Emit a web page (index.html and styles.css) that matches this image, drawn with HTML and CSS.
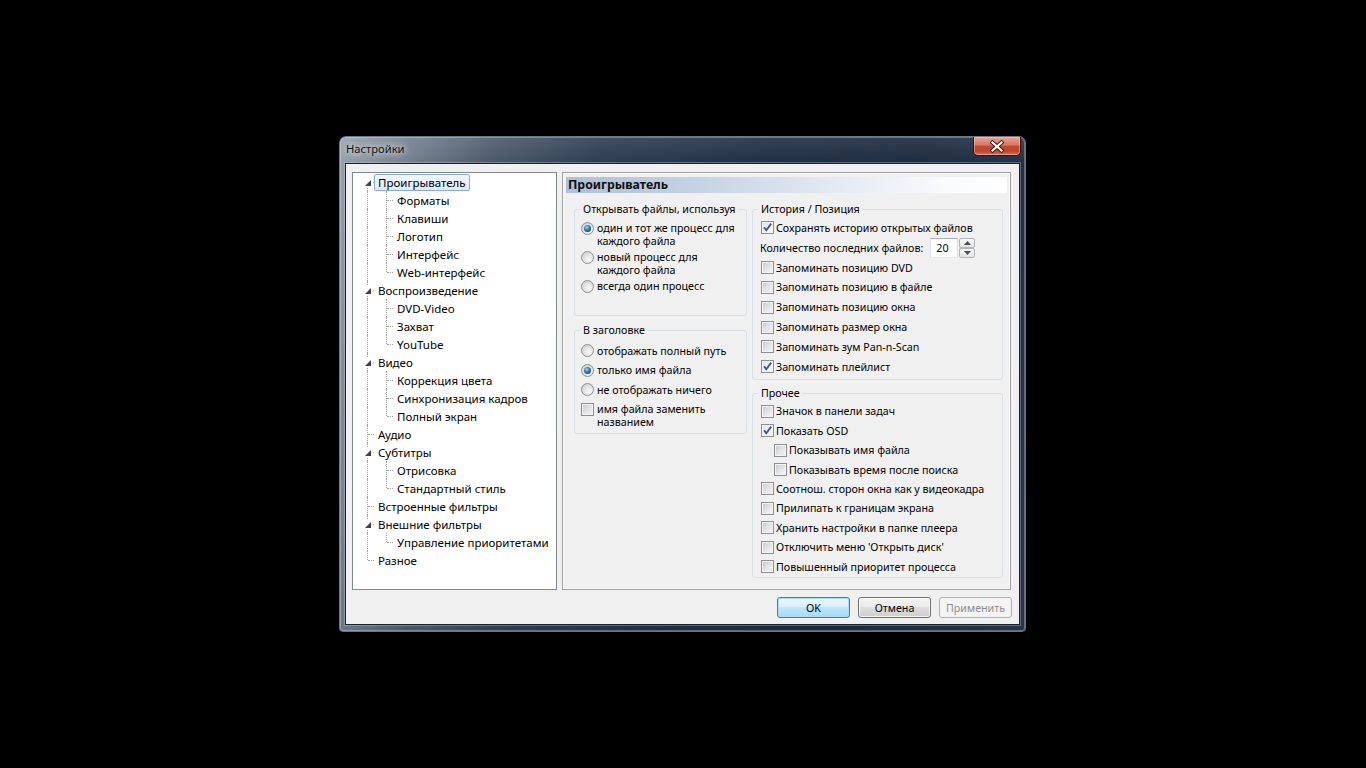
FILE: index.html
```html
<!DOCTYPE html>
<html lang="ru">
<head>
<meta charset="utf-8">
<title>Настройки</title>
<link rel="stylesheet" href="styles.css">
</head>
<body>
<div class="window">
  <div class="titlebar">
    <span class="title">Настройки</span>
    <div class="close">
      <svg width="16" height="13" viewBox="0 0 16 13"><path d="M3.5 2.5 L12.5 10.5 M12.5 2.5 L3.5 10.5" stroke="#3a1410" stroke-width="4" stroke-linecap="square"/><path d="M3.5 2.5 L12.5 10.5 M12.5 2.5 L3.5 10.5" stroke="#ffffff" stroke-width="2.2" stroke-linecap="square"/></svg>
    </div>
  </div>
  <div class="client">
    <div class="main">
      <div class="tree">
        <div class="row r first"><i class="vl bh"></i><i class="hl"></i><i class="tri"><svg width="6" height="6" viewBox="0 0 6 6"><path d="M6 0V6H0Z" fill="#404040"/></svg></i><span class="label sel">Проигрыватель</span></div>
        <div class="row c"><i class="vl"></i><i class="cvl"></i><i class="chl"></i><span class="label">Форматы</span></div>
        <div class="row c"><i class="vl"></i><i class="cvl"></i><i class="chl"></i><span class="label">Клавиши</span></div>
        <div class="row c"><i class="vl"></i><i class="cvl"></i><i class="chl"></i><span class="label">Логотип</span></div>
        <div class="row c"><i class="vl"></i><i class="cvl"></i><i class="chl"></i><span class="label">Интерфейс</span></div>
        <div class="row c"><i class="vl"></i><i class="cvl th"></i><i class="chl"></i><span class="label">Web-интерфейс</span></div>
        <div class="row r"><i class="vl"></i><i class="hl"></i><i class="tri"><svg width="6" height="6" viewBox="0 0 6 6"><path d="M6 0V6H0Z" fill="#404040"/></svg></i><span class="label">Воспроизведение</span></div>
        <div class="row c"><i class="vl"></i><i class="cvl"></i><i class="chl"></i><span class="label">DVD-Video</span></div>
        <div class="row c"><i class="vl"></i><i class="cvl"></i><i class="chl"></i><span class="label">Захват</span></div>
        <div class="row c"><i class="vl"></i><i class="cvl th"></i><i class="chl"></i><span class="label">YouTube</span></div>
        <div class="row r"><i class="vl"></i><i class="hl"></i><i class="tri"><svg width="6" height="6" viewBox="0 0 6 6"><path d="M6 0V6H0Z" fill="#404040"/></svg></i><span class="label">Видео</span></div>
        <div class="row c"><i class="vl"></i><i class="cvl"></i><i class="chl"></i><span class="label">Коррекция цвета</span></div>
        <div class="row c"><i class="vl"></i><i class="cvl"></i><i class="chl"></i><span class="label">Синхронизация кадров</span></div>
        <div class="row c"><i class="vl"></i><i class="cvl th"></i><i class="chl"></i><span class="label">Полный экран</span></div>
        <div class="row r"><i class="vl"></i><i class="hl"></i><span class="label">Аудио</span></div>
        <div class="row r"><i class="vl"></i><i class="hl"></i><i class="tri"><svg width="6" height="6" viewBox="0 0 6 6"><path d="M6 0V6H0Z" fill="#404040"/></svg></i><span class="label">Субтитры</span></div>
        <div class="row c"><i class="vl"></i><i class="cvl"></i><i class="chl"></i><span class="label">Отрисовка</span></div>
        <div class="row c"><i class="vl"></i><i class="cvl th"></i><i class="chl"></i><span class="label">Стандартный стиль</span></div>
        <div class="row r"><i class="vl"></i><i class="hl"></i><span class="label">Встроенные фильтры</span></div>
        <div class="row r"><i class="vl"></i><i class="hl"></i><i class="tri"><svg width="6" height="6" viewBox="0 0 6 6"><path d="M6 0V6H0Z" fill="#404040"/></svg></i><span class="label">Внешние фильтры</span></div>
        <div class="row c"><i class="vl"></i><i class="cvl th"></i><i class="chl"></i><span class="label">Управление приоритетами</span></div>
        <div class="row r"><i class="vl th"></i><i class="hl"></i><span class="label">Разное</span></div>
      </div>

      <div class="panel">
        <div class="panel-head">Проигрыватель</div>
        <div class="cols">
          <div class="col col-left">
            <div class="group g-open">
              <span class="gtitle">Открывать файлы, используя</span>
              <div class="opts">
                <div class="opt"><span class="radio on"></span><span class="txt">один и тот же процесс для<br>каждого файла</span></div>
                <div class="opt"><span class="radio"></span><span class="txt">новый процесс для<br>каждого файла</span></div>
                <div class="opt"><span class="radio"></span><span class="txt">всегда один процесс</span></div>
              </div>
            </div>
            <div class="group g-title">
              <span class="gtitle">В заголовке</span>
              <div class="rows rows-title">
                <div class="line lt"><span class="radio"></span><span class="txt">отображать полный путь</span></div>
                <div class="line lt"><span class="radio on"></span><span class="txt">только имя файла</span></div>
                <div class="line lt"><span class="radio"></span><span class="txt">не отображать ничего</span></div>
                <div class="opt opt-cb"><span class="cb"></span><span class="txt">имя файла заменить<br>названием</span></div>
              </div>
            </div>
          </div>
          <div class="col col-right">
            <div class="group g-hist">
              <span class="gtitle">История / Позиция</span>
              <div class="rows rows-hist">
                <div class="line lh"><span class="cb on"><svg width="11" height="11" viewBox="0 0 11 11"><path d="M2 5.2 L4.3 8.3 L9.2 1.6" fill="none" stroke="#3f5686" stroke-width="1.8"/></svg></span><span class="txt">Сохранять историю открытых файлов</span></div>
                <div class="line lh spinrow"><span class="txt">Количество последних файлов:</span>
                  <span class="spin"><span class="spin-edit">20</span><span class="spin-btns"><span class="sb"><svg width="7" height="4" viewBox="0 0 7 4"><path d="M0 4H7L3.5 0Z" fill="#4d4d4d"/></svg></span><span class="sb"><svg width="7" height="4" viewBox="0 0 7 4"><path d="M0 0H7L3.5 4Z" fill="#4d4d4d"/></svg></span></span></span>
                </div>
                <div class="line lh"><span class="cb"></span><span class="txt">Запоминать позицию DVD</span></div>
                <div class="line lh"><span class="cb"></span><span class="txt">Запоминать позицию в файле</span></div>
                <div class="line lh"><span class="cb"></span><span class="txt">Запоминать позицию окна</span></div>
                <div class="line lh"><span class="cb"></span><span class="txt">Запоминать размер окна</span></div>
                <div class="line lh"><span class="cb"></span><span class="txt">Запоминать зум Pan-n-Scan</span></div>
                <div class="line lh"><span class="cb on"><svg width="11" height="11" viewBox="0 0 11 11"><path d="M2 5.2 L4.3 8.3 L9.2 1.6" fill="none" stroke="#3f5686" stroke-width="1.8"/></svg></span><span class="txt">Запоминать плейлист</span></div>
              </div>
            </div>
            <div class="group g-misc">
              <span class="gtitle">Прочее</span>
              <div class="rows rows-misc">
                <div class="line lm"><span class="cb"></span><span class="txt">Значок в панели задач</span></div>
                <div class="line lm"><span class="cb on"><svg width="11" height="11" viewBox="0 0 11 11"><path d="M2 5.2 L4.3 8.3 L9.2 1.6" fill="none" stroke="#3f5686" stroke-width="1.8"/></svg></span><span class="txt">Показать OSD</span></div>
                <div class="line lm ind"><span class="cb"></span><span class="txt">Показывать имя файла</span></div>
                <div class="line lm ind"><span class="cb"></span><span class="txt">Показывать время после поиска</span></div>
                <div class="line lm"><span class="cb"></span><span class="txt">Соотнош. сторон окна как у видеокадра</span></div>
                <div class="line lm"><span class="cb"></span><span class="txt">Прилипать к границам экрана</span></div>
                <div class="line lm"><span class="cb"></span><span class="txt">Хранить настройки в папке плеера</span></div>
                <div class="line lm"><span class="cb"></span><span class="txt">Отключить меню 'Открыть диск'</span></div>
                <div class="line lm"><span class="cb"></span><span class="txt">Повышенный приоритет процесса</span></div>
              </div>
            </div>
          </div>
        </div>
      </div>
    </div>
    <div class="buttons">
      <button class="btn default">OK</button>
      <button class="btn">Отмена</button>
      <button class="btn disabled">Применить</button>
    </div>
  </div>
</div>
</body>
</html>
```

FILE: styles.css
```css
html, body {
  margin: 0;
  padding: 0;
  background: #000;
}
body {
  width: 1366px;
  height: 768px;
  overflow: hidden;
  font-family: "Noto Sans", "Open Sans", sans-serif;
  font-size: 11.5px;
  color: #000;
}

/* ---------- window frame ---------- */
.window {
  margin: 136px 0 0 339px;
  width: 687px;
  height: 496px;
  box-sizing: border-box;
  border: 1px solid #6b7784;
  border-radius: 7px 7px 4px 4px;
  padding: 0 6px 7px;
  display: flex;
  flex-direction: column;
  background:
    linear-gradient(180deg, rgba(255,255,255,0.10) 0px, rgba(255,255,255,0) 28px),
    linear-gradient(100deg, #97a2ad 0%, #74818f 9%, #4a596a 20%, #2c3c50 34%, #1f2e42 55%, #1b2a3d 75%, #26364a 100%);
  box-shadow: inset 0 0 0 1px rgba(255,255,255,0.28);
}
.titlebar {
  height: 27px;
  flex: none;
  display: flex;
  justify-content: space-between;
  align-items: flex-start;
}
.title {
  padding-top: 4px;
  line-height: 16px;
  font-size: 11.2px;
  color: #111;
  text-shadow: 0 0 6px rgba(255,255,255,0.9), 0 0 10px rgba(255,255,255,0.6);
}
.close {
  width: 48px;
  height: 19px;
  margin-right: -2px;
  box-sizing: border-box;
  border: 1px solid #3d120c;
  border-top: none;
  border-radius: 0 0 5px 5px;
  background: linear-gradient(180deg, #e8a594 0%, #d37864 45%, #c34a33 50%, #c4432b 80%, #d9745a 100%);
  box-shadow: inset 0 0 0 1px rgba(255,210,200,0.45);
  display: flex;
  align-items: center;
  justify-content: center;
}

/* ---------- client ---------- */
.client {
  height: 460px;
  flex: none;
  background: #f0f0f0;
  display: flex;
  flex-direction: column;
  box-shadow: 0 0 0 1px #17222f, 0 0 0 2px rgba(200,210,222,0.35);
}
.main {
  display: flex;
  gap: 5px;
  padding: 8px 8px 0 6px;
  height: 418px;
}

/* ---------- tree ---------- */
.tree {
  width: 205px;
  height: 418px;
  box-sizing: border-box;
  border: 1px solid #828790;
  background: #fff;
}
.row {
  position: relative;
  height: 18px;
  display: flex;
  align-items: center;
}
.row.r { padding-left: 21px; }
.row.c { padding-left: 40px; }
.label {
  border: 1px solid transparent;
  border-radius: 2px;
  padding: 0 3px;
  line-height: 15px;
  white-space: nowrap;
}
.label.sel {
  border-color: #84acdd;
  background: linear-gradient(180deg, #f2f7fe 0%, #dde9f8 100%);
}
.vl, .cvl, .hl, .chl {
  position: absolute;
  display: block;
}
.vl {
  left: 14px;
  top: 0;
  height: 18px;
  border-left: 1px dotted #a0a0a0;
}
.vl.bh { top: 9px; height: 9px; }
.vl.th { height: 9px; }
.cvl {
  left: 33px;
  top: 0;
  height: 18px;
  border-left: 1px dotted #a0a0a0;
}
.cvl.th { height: 9px; }
.hl {
  left: 15px;
  top: 9px;
  width: 6px;
  border-top: 1px dotted #a0a0a0;
}
.chl {
  left: 34px;
  top: 9px;
  width: 6px;
  border-top: 1px dotted #a0a0a0;
}
.tri {
  position: absolute;
  left: 10px;
  top: 5px;
  width: 9px;
  height: 9px;
  background: #fff;
  display: flex;
  align-items: center;
  justify-content: center;
}

/* ---------- panel ---------- */
.panel {
  width: 449px;
  height: 418px;
  box-sizing: border-box;
  border: 1px solid #a0a0a0;
  box-shadow: inset 0 0 0 1px #fbfbfb;
  padding: 4px 3px 0;
  font-size: 10.7px;
}
.panel-head {
  height: 16px;
  line-height: 16px;
  padding-left: 2px;
  font-weight: bold;
  font-size: 12.3px;
  color: #111;
  background: linear-gradient(90deg, #aebfd7 0%, #c6d3e4 30%, #e2e9f2 60%, #f8fafc 85%, #ffffff 100%);
}
.cols {
  display: flex;
  gap: 5px;
  margin: 16px 0 0 8px;
}
.col-left { width: 173px; }
.col-right { width: 251px; }

.group {
  box-sizing: border-box;
  border: 1px solid #d5dfe5;
  border-radius: 3px;
}
.gtitle {
  display: block;
  width: max-content;
  margin: -8px 0 0 5px;
  padding: 0 3px;
  line-height: 14px;
  background: #f0f0f0;
}
.g-open { height: 107px; }
.g-title { height: 104px; margin-top: 14px; }
.g-hist { height: 171px; }
.g-misc { height: 185px; margin-top: 13px; }

.opts { padding-top: 6px; }
.opt {
  display: flex;
  align-items: flex-start;
  gap: 3px;
  padding-left: 6px;
  line-height: 13px;
  margin-bottom: 3px;
}
.opt-cb { padding-top: 3px; }

.rows-title { padding-top: 4px; }
.rows-hist { padding-top: 2px; }
.rows-misc { padding-top: 1.5px; }

.line {
  display: flex;
  align-items: center;
  white-space: nowrap;
}
.lt { height: 19.5px; padding-left: 6px; gap: 3px; }
.lh { height: 19.85px; padding-left: 8px; gap: 2px; }
.lm { height: 19.45px; padding-left: 8px; gap: 2px; }
.lm.ind { padding-left: 21px; }
.spinrow { padding-left: 7px; }

/* ---------- controls ---------- */
.radio {
  flex: none;
  width: 13px;
  height: 13px;
  box-sizing: border-box;
  border: 1px solid #8e8f8f;
  border-radius: 50%;
  background: radial-gradient(circle at 65% 70%, #f8f8f8 0%, #e6e7e9 40%, #c3c7cc 100%);
  display: flex;
  align-items: center;
  justify-content: center;
}
.radio.on::after {
  content: "";
  width: 7px;
  height: 7px;
  border-radius: 50%;
  background: radial-gradient(circle at 40% 35%, #a6ddf6 0%, #3d8cc0 35%, #1a4f7d 70%, #123a5f 100%);
}
.cb {
  flex: none;
  width: 13px;
  height: 13px;
  box-sizing: border-box;
  border: 1px solid #8e8f8f;
  background: linear-gradient(135deg, #c2c6cc 0%, #dfe1e4 45%, #f6f6f6 100%);
  box-shadow: inset 0 0 0 1px #f4f4f4;
  display: flex;
  align-items: center;
  justify-content: center;
}
.cb.on {
  background: linear-gradient(135deg, #dfe3e8 0%, #f2f3f5 60%, #fbfbfb 100%);
}

.spin {
  display: flex;
  height: 20px;
  margin-left: 5px;
}
.spin-edit {
  width: 28px;
  box-sizing: border-box;
  border: 1px solid;
  border-color: #abadb3 #dbdfe6 #e3e9ef #e2e3ea;
  background: #fff;
  padding-left: 5px;
  line-height: 18px;
}
.spin-btns {
  display: flex;
  flex-direction: column;
  width: 16px;
  margin-left: 1px;
}
.sb {
  flex: 1;
  box-sizing: border-box;
  border: 1px solid #b1b6bc;
  border-radius: 2px;
  background: linear-gradient(180deg, #f7f7f7 0%, #e4e4e4 100%);
  display: flex;
  align-items: center;
  justify-content: center;
}

/* ---------- buttons ---------- */
.buttons {
  display: flex;
  justify-content: flex-end;
  gap: 8px;
  padding: 7px 7px 0 0;
}
.btn {
  width: 73px;
  height: 21px;
  box-sizing: border-box;
  border: 1px solid #707070;
  border-radius: 3px;
  background: linear-gradient(180deg, #f2f2f2 0%, #ebebeb 49%, #dddddd 50%, #cfcfcf 100%);
  box-shadow: inset 0 0 0 1px rgba(255,255,255,0.75);
  font-family: "Noto Sans", "Open Sans", sans-serif;
  font-size: 10.7px;
  color: #000;
  padding: 0;
  line-height: 18px;
}
.btn.default {
  border-color: #3c7fb1;
  background: linear-gradient(180deg, #eaf6fd 0%, #d9f0fc 49%, #bee6fd 50%, #a7d9f5 100%);
  box-shadow: inset 0 0 0 1px #a9dcf6;
}
.btn.disabled {
  border-color: #adb2b5;
  background: #f4f4f4;
  box-shadow: none;
  color: #8d8d8d;
}
```
